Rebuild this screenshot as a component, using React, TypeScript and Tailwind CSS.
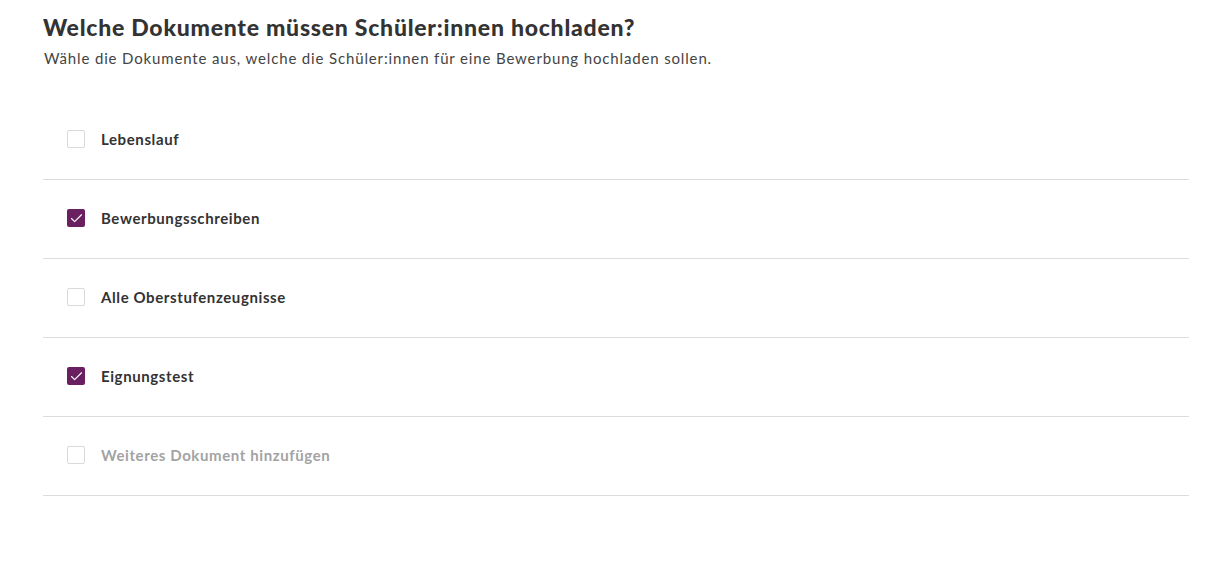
import { Check } from 'lucide-react';

const docs = [
  { label: 'Lebenslauf', checked: false, muted: false },
  { label: 'Bewerbungsschreiben', checked: true, muted: false },
  { label: 'Alle Oberstufenzeugnisse', checked: false, muted: false },
  { label: 'Eignungstest', checked: true, muted: false },
  { label: 'Weiteres Dokument hinzufügen', checked: false, muted: true },
];

export default function App() {
  return (
    <div className="min-h-[569px] bg-white px-[43px] pt-[13px] font-['Lato',sans-serif] text-[#333]">
      <h1 className="text-[23px] font-black leading-7 tracking-[0.75px]">
        Welche Dokumente müssen Schüler:innen hochladen?
      </h1>
      <p className="mt-[7px] pl-px text-[15px] leading-5 tracking-[0.85px] text-[#444]">
        Wähle die Dokumente aus, welche die Schüler:innen für eine Bewerbung hochladen sollen.
      </p>

      <ul className="mt-[33px] w-[1146px]">
        {docs.map((doc) => (
          <li
            key={doc.label}
            className="flex h-[79px] items-center gap-4 border-b border-[#dcdcdc] pb-[2px] pl-6"
          >
            {doc.checked ? (
              <span className="flex h-[18px] w-[18px] items-center justify-center rounded-[2px] bg-[#6a2060]">
                <Check size={15} strokeWidth={1.75} className="text-white" />
              </span>
            ) : (
              <span className="h-[18px] w-[18px] rounded-[2px] border border-[#d9d9d9] bg-white" />
            )}
            <span
              className={
                'text-[15px] font-bold tracking-[0.6px] ' +
                (doc.muted ? 'text-[#a3a3a3]' : 'text-[#333]')
              }
            >
              {doc.label}
            </span>
          </li>
        ))}
      </ul>
    </div>
  );
}
